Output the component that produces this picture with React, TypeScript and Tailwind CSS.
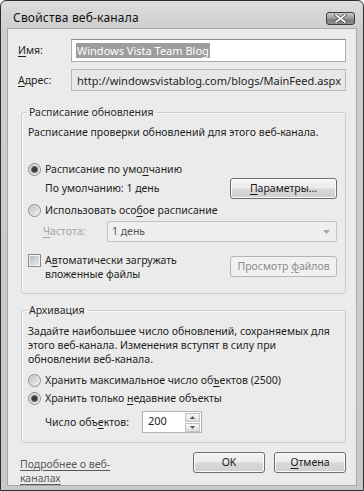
import React from 'react';

function Radio({ checked }: { checked?: boolean }) {
  return (
    <span className="flex h-[13px] w-[13px] shrink-0 items-center justify-center rounded-full border border-[#8a8a8a] bg-gradient-to-br from-[#cfcfcf] to-[#f7f7f7]">
      {checked ? (
        <span className="flex h-[9px] w-[9px] items-center justify-center rounded-full bg-[#d9d9d9]">
          <span className="h-[5px] w-[5px] rounded-full bg-[#3a3a3a] shadow-[0_0_0_1px_#6f6f6f]" />
        </span>
      ) : (
        <span className="h-[9px] w-[9px] rounded-full bg-gradient-to-br from-[#c4c4c4] to-[#ededed]" />
      )}
    </span>
  );
}

function Checkbox() {
  return (
    <span className="flex h-[13px] w-[13px] shrink-0 items-center justify-center border border-[#8a8a8a] bg-[#f4f4f4]">
      <span className="h-[9px] w-[9px] bg-gradient-to-br from-[#bdbdbd] to-[#e8e8e8]" />
    </span>
  );
}

function Button({ children, disabled, className = '' }: { children: React.ReactNode; disabled?: boolean; className?: string }) {
  return (
    <div
      className={
        'flex h-[21px] items-center justify-center rounded-[3px] border ' +
        (disabled
          ? 'border-[#b5b5b5] bg-[#f1f1f1] text-[#8c8c8c] '
          : 'border-[#6e6e6e] bg-[linear-gradient(#f4f4f4_0%,#ebebeb_48%,#d9d9d9_52%,#cfcfcf_100%)] text-[#1a1a1a] shadow-[inset_0_0_0_1px_#fbfbfb] ') +
        className
      }
    >
      {children}
    </div>
  );
}

function Legend({ children }: { children: React.ReactNode }) {
  return <legend className="-ml-[1px] px-[2px] leading-[13px] text-[#2a2a2a]">{children}</legend>;
}

export default function App() {
  return (
    <div className="h-[491px] w-[364px] bg-white font-['Noto_Sans',sans-serif] text-[10.5px] leading-[13px] text-[#1e1e1e]">
      <div className="flex h-full w-full flex-col rounded-t-[6px] border border-[#2e2e2e] bg-[linear-gradient(#dcdcdc,#cdcdcd_30px,#c9c9c9)]">
        {/* Title bar */}
        <div className="flex h-[27px] shrink-0 items-start justify-between pl-[12px] pr-[8px]">
          <span className="mt-[9px] text-[12px] leading-[16px] tracking-[0.2px] text-[#111]">Свойства веб-канала</span>
          <div className="mt-[11px] flex h-[13px] w-[29px] items-center justify-center rounded-[3px] border border-[#3c3c3c] bg-[linear-gradient(#c9c9c9,#9a9a9a_50%,#7d7d7d_51%,#8c8c8c)]">
            <svg width="13" height="9" viewBox="0 0 13 9">
              <path d="M2 1 L11 8 M11 1 L2 8" stroke="#4a4a4a" strokeWidth="3.2" strokeLinecap="square" />
              <path d="M2 1 L11 8 M11 1 L2 8" stroke="#ffffff" strokeWidth="1.6" strokeLinecap="square" />
            </svg>
          </div>
        </div>

        {/* Client area */}
        <div className="mx-[6px] mb-[5px] flex flex-1 flex-col border border-[#a8a8a8] bg-[#ebebeb] pl-[10px] pr-[10px]">
          {/* Name */}
          <div className="mt-[10px] flex items-center">
            <span className="w-[53px]">
              <span className="underline underline-offset-2">И</span>мя:
            </span>
            <div className="flex h-[23px] flex-1 items-center border border-[#ababab] border-t-[#8e8e8e] bg-white pl-[4px]">
              <span className="bg-[#9d9d9d] px-[1px] text-[11px] leading-[15px] text-white">Windows Vista Team Blog</span>
            </div>
          </div>

          {/* Address */}
          <div className="mt-[7px] flex items-center">
            <span className="w-[53px]">
              <span className="underline underline-offset-2">А</span>дрес:
            </span>
            <div className="flex h-[22px] flex-1 items-center border border-[#b9b9b9] bg-[#e7e7e7] pl-[5px] text-[11px]">
              http://windowsvistablog.com/blogs/MainFeed.aspx
            </div>
          </div>

          {/* Schedule group */}
          <fieldset className="ml-[3px] mt-[15px] rounded-[3px] border border-[#cdcdcd] pb-[12px] pl-[6px] pr-[8px] shadow-[inset_1px_1px_0_#fafafa]">
            <Legend>Расписание обновления</Legend>
            <div className="mt-[7px]">Расписание проверки обновлений для этого веб-канала.</div>

            <div className="mt-[24px] flex items-center gap-[4px]">
              <Radio checked />
              <span>
                Расписание по умо<span className="underline underline-offset-2">л</span>чанию
              </span>
            </div>

            <div className="mt-[2px] flex items-center justify-between pl-[17px]">
              <span>По умолчанию: 1 день</span>
              <Button className="w-[107px]">
                <span>
                  <span className="underline underline-offset-2">П</span>араметры...
                </span>
              </Button>
            </div>

            <div className="mt-[5px] flex items-center gap-[4px]">
              <Radio />
              <span>
                Использовать осо<span className="underline underline-offset-2">б</span>ое расписание
              </span>
            </div>

            <div className="mt-[4px] flex items-center pl-[15px]">
              <span className="w-[64px] text-[#a3a3a3]">
                <span className="underline underline-offset-2">Ч</span>астота:
              </span>
              <div className="flex h-[21px] flex-1 items-center justify-between rounded-[2px] border border-[#c3c3c3] bg-[#efefef] pl-[4px] pr-[6px] text-[#555]">
                <span>1 день</span>
                <svg width="7" height="4" viewBox="0 0 7 4">
                  <path d="M0 0 H7 L3.5 4 Z" fill="#a6a6a6" />
                </svg>
              </div>
            </div>

            <div className="mt-[11px] flex items-start justify-between">
              <div className="flex items-start gap-[4px]">
                <span className="mt-[1px]">
                  <Checkbox />
                </span>
                <span className="leading-[14px]">
                  А<span className="underline underline-offset-2">в</span>томатически загружать
                  <br />
                  вложенные файлы
                </span>
              </div>
              <Button disabled className="mt-[3px] w-[107px]">
                <span>
                  Просмотр <span className="underline underline-offset-2">ф</span>айлов
                </span>
              </Button>
            </div>
          </fieldset>

          {/* Archive group */}
          <fieldset className="ml-[3px] mt-[10px] rounded-[3px] border border-[#cdcdcd] pb-[9px] pl-[6px] pr-[8px] shadow-[inset_1px_1px_0_#fafafa]">
            <Legend>Архивация</Legend>
            <div className="mt-[7px] leading-[14px]">
              Задайте наибольшее число обновлений, сохраняемых для
              <br />
              этого веб-канала. Изменения вступят в силу при
              <br />
              обновлении веб-канала.
            </div>

            <div className="mt-[8px] flex items-center gap-[4px]">
              <Radio />
              <span>
                Хранить максимальное число об<span className="underline underline-offset-2">ъ</span>ектов (2500)
              </span>
            </div>

            <div className="mt-[5px] flex items-center gap-[4px]">
              <Radio checked />
              <span>
                Хранить только <span className="underline underline-offset-2">н</span>едавние объекты
              </span>
            </div>

            <div className="mt-[6px] flex items-center pl-[17px]">
              <span className="w-[97px]">
                Число объ<span className="underline underline-offset-2">е</span>ктов:
              </span>
              <div className="flex h-[22px] w-[60px] items-center justify-between border border-[#b3b3b3] bg-white pl-[5px] pr-[1px]">
                <span className="mb-[3px] text-[11px]">200</span>
                <div className="flex flex-col gap-[1px]">
                  <div className="flex h-[9px] w-[15px] items-center justify-center border border-[#c4c4c4] bg-[linear-gradient(#f7f7f7,#dedede)]">
                    <svg width="5" height="3" viewBox="0 0 5 3">
                      <path d="M0 3 H5 L2.5 0 Z" fill="#555" />
                    </svg>
                  </div>
                  <div className="flex h-[9px] w-[15px] items-center justify-center border border-[#c4c4c4] bg-[linear-gradient(#f7f7f7,#dedede)]">
                    <svg width="5" height="3" viewBox="0 0 5 3">
                      <path d="M0 0 H5 L2.5 3 Z" fill="#555" />
                    </svg>
                  </div>
                </div>
              </div>
            </div>
          </fieldset>

          {/* Footer */}
          <div className="mt-[9px] flex items-start justify-between">
            <a className="ml-[2px] mt-[5px] leading-[14px] text-[#5a5a5a] underline underline-offset-2">
              Подробнее о веб-
              <br />
              каналах
            </a>
            <div className="flex gap-[9px]">
              <Button className="w-[72px]">OK</Button>
              <Button className="w-[72px]">
                <span>
                  <span className="underline underline-offset-2">О</span>тмена
                </span>
              </Button>
            </div>
          </div>
        </div>
      </div>
    </div>
  );
}
